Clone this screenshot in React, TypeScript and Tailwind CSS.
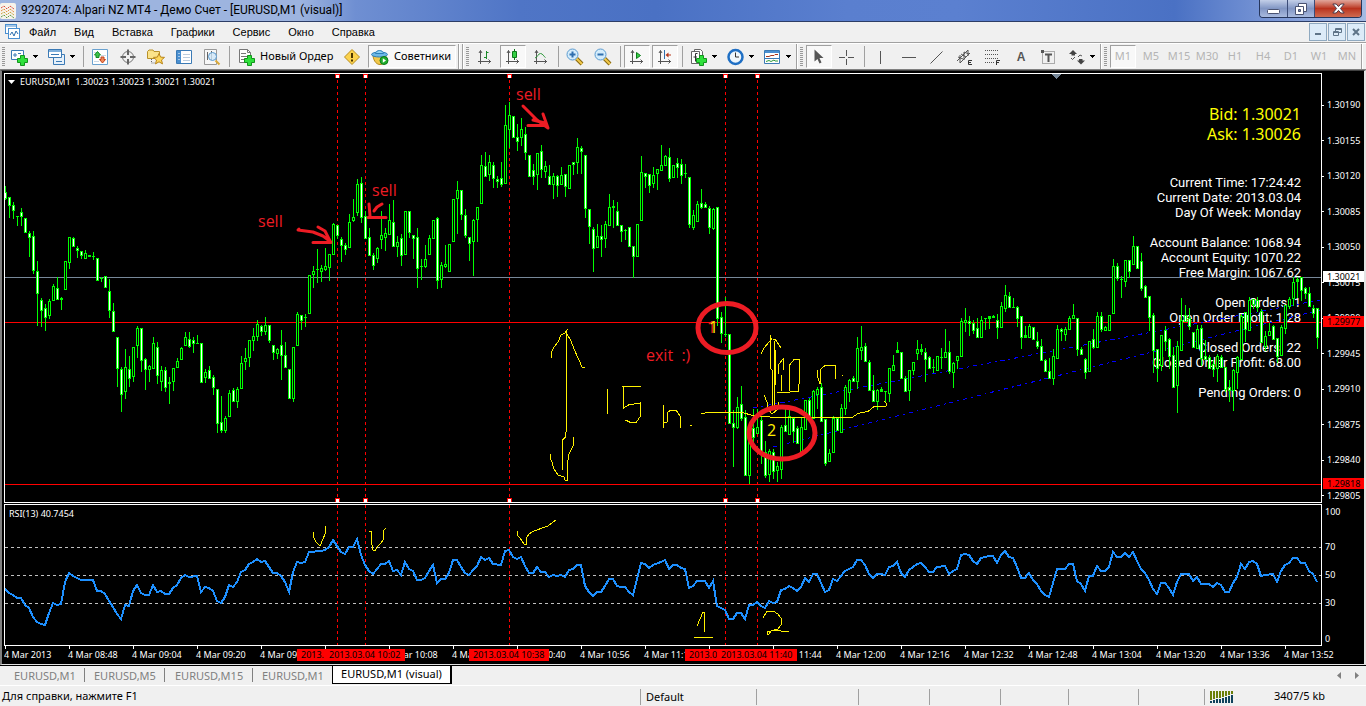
import type { ReactNode } from 'react'

// high, body top, body bottom, low, kind (d = falling, u = rising, x = doji)
const CANDLES = `186 192 198 199 d|197 197 205 217 d|202 205 210 218 d|216 216 216 225 x|208 212 216 225 d|218 218 232 232 d|231 233 237 256 d|231 236 270 273 d|261 271 293 325 d|298 300 310 326 d
304 308 317 330 d|299 301 315 318 u|284 286 300 300 u|277 288 299 299 d|297 298 299 309 x|261 261 289 289 u|237 237 262 268 u|237 238 246 246 d|246 248 250 257 d|251 251 255 258 d
250 253 258 258 u|255 255 256 256 x|252 256 256 259 x|258 258 280 280 d|277 278 278 281 x|276 276 287 287 d|279 291 310 317 d|303 311 331 331 d|337 337 368 386 d|367 369 394 411 d
349 367 391 398 u|356 369 378 386 d|347 347 376 381 u|326 328 345 357 u|328 328 360 371 d|358 359 369 389 d|365 366 369 381 u|337 343 368 368 u|342 347 375 383 d|366 370 381 390 u
367 370 387 391 d|377 382 383 403 x|368 368 381 390 u|358 361 367 367 u|347 348 359 359 u|332 337 345 345 u|332 339 346 347 d|337 340 343 352 d|335 343 343 343 x|343 343 382 382 d
369 372 377 382 u|366 370 378 378 d|375 377 387 394 d|389 389 423 432 d|396 422 430 432 d|416 418 430 432 u|390 393 416 416 u|388 390 401 401 d|387 389 401 407 u|356 363 388 388 u
348 358 361 369 u|340 340 357 366 u|328 336 340 350 u|320 324 336 340 u|325 326 331 335 d|317 325 331 334 u|325 325 340 342 d|345 345 352 359 d|348 349 353 358 u|330 345 355 379 d
342 355 367 367 d|369 369 398 398 d|347 347 398 401 u|312 314 345 345 u|315 315 320 329 d|314 317 317 326 x|275 275 313 313 u|266 271 274 287 u|249 269 269 282 x|265 268 271 281 u
248 266 269 270 u|254 254 267 280 u|223 224 254 254 u|225 225 235 238 d|237 239 245 261 d|243 245 249 254 d|214 222 247 247 u|199 217 220 221 u|179 184 212 215 u|177 183 217 222 d
211 216 238 238 d|228 237 255 255 d|253 255 265 269 d|247 248 258 262 u|211 235 239 248 u|228 233 237 250 u|204 220 234 234 u|200 222 246 246 d|236 242 246 256 u|234 238 255 265 d
211 211 254 254 u|211 211 232 237 d|235 235 238 258 d|228 237 268 287 d|259 266 266 279 x|245 259 266 267 u|235 238 254 254 u|220 220 238 238 u|217 218 280 288 d|262 265 279 287 u
245 264 266 267 u|244 244 271 271 u|199 199 241 241 u|181 190 198 233 u|190 190 214 219 d|209 215 235 237 d|237 237 243 260 d|219 220 241 275 u|207 207 219 241 u|155 165 203 203 u
152 166 176 176 d|155 162 174 180 u|162 165 178 187 d|176 179 181 187 d|162 178 184 186 d|105 125 183 183 u|102 115 129 147 u|116 116 137 137 d|124 137 141 150 d|118 129 137 145 u
127 134 152 159 d|155 155 176 176 d|164 170 176 184 d|153 153 174 189 u|145 151 169 177 d|161 166 171 177 u|165 176 184 184 d|173 176 184 198 u|175 176 185 196 d|167 175 184 184 u
174 174 186 196 d|165 165 188 188 u|162 162 164 174 d|138 147 162 173 u|146 148 151 173 d|155 155 208 217 d|209 209 226 243 d|227 229 248 271 d|224 236 247 247 u|225 236 239 256 d
221 224 238 247 u|194 207 225 225 u|200 206 207 227 x|202 211 225 225 d|225 225 231 241 d|229 230 230 239 x|227 227 246 246 d|246 246 256 277 d|224 224 256 256 u|156 172 220 220 u
173 173 176 187 d|174 174 185 192 d|167 175 183 187 u|169 169 173 189 u|145 165 170 170 u|155 156 165 165 u|148 157 178 181 d|165 165 177 177 u|158 163 167 177 d|159 164 175 183 d
164 173 173 177 x|177 177 224 227 d|210 215 227 229 u|201 204 221 221 u|189 203 207 208 d|202 204 207 207 d|206 208 227 233 d|208 209 228 229 u|207 207 318 325 d|312 317 333 342 d
297 334 334 336 x|334 334 423 423 d|410 423 427 466 d|397 407 427 428 u|386 404 418 420 d|410 417 475 475 d|426 426 475 483 u|409 428 437 443 d|409 427 433 433 u|417 420 451 463 d
441 452 475 477 d|449 451 474 481 u|449 452 471 478 d|462 466 470 481 u|425 427 469 478 u|409 425 431 431 d|406 416 434 434 u|417 418 431 442 d|426 428 443 443 d|417 427 452 452 u
400 400 429 429 u|398 400 418 418 d|390 391 418 418 u|387 389 394 408 u|383 387 421 421 d|419 419 463 465 d|449 453 461 461 u|416 418 452 452 u|418 418 430 430 d|404 408 432 432 u
385 387 408 414 u|379 380 392 401 u|376 378 381 381 d|337 348 381 388 u|326 347 350 359 u|343 346 361 361 d|360 362 390 390 d|375 390 401 401 d|389 390 401 409 u|387 389 391 391 x
391 391 391 402 x|368 368 393 401 u|355 365 370 370 u|342 350 352 352 x|352 352 378 378 d|376 378 391 391 d|370 370 390 400 u|362 362 370 374 u|340 349 353 359 u|344 349 351 354 x
348 352 359 381 d|356 357 368 368 d|359 367 367 372 x|356 356 370 370 u|348 357 357 368 x|329 352 357 357 u|341 352 371 373 d|362 363 372 387 u|356 356 360 368 u|318 321 356 356 u
308 320 322 331 u|316 321 323 335 d|320 323 330 333 d|318 328 337 337 d|316 320 337 337 u|318 318 318 329 x|316 316 318 328 x|315 316 317 317 x|314 320 327 338 d|302 306 327 327 u
285 295 308 311 u|292 296 307 307 d|298 307 307 307 x|306 307 318 326 d|316 316 337 348 d|326 335 337 337 x|324 326 337 337 u|327 327 339 339 d|332 341 346 348 d|339 346 360 360 d
359 360 371 371 d|358 371 378 378 d|349 356 378 384 u|325 329 358 358 u|328 329 331 340 d|327 329 334 340 u|316 318 329 329 u|304 315 318 318 u|318 318 349 355 d|347 349 354 354 d
358 359 372 378 d|341 341 371 371 u|329 339 347 348 d|312 316 347 347 u|312 316 329 331 d|326 327 330 330 u|315 315 330 330 u|259 266 313 313 u|263 266 278 280 d|276 279 279 297 x
260 260 281 286 u|260 260 271 277 d|236 246 264 264 u|246 246 268 268 d|253 261 288 290 d|285 286 297 297 d|296 296 317 330 d|313 315 350 372 d|349 349 368 381 d|335 335 365 370 u
326 330 341 350 d|338 339 356 368 d|347 355 387 387 d|341 346 385 412 u|298 320 350 350 u|305 315 321 321 d|308 318 326 329 d|332 332 347 347 d|325 329 348 348 u|325 328 358 365 d
340 356 359 359 d|355 357 368 368 d|360 364 369 376 d|354 356 368 381 u|355 357 367 367 d|367 367 389 391 d|380 387 390 401 d|369 370 390 410 u|356 357 372 388 u|314 316 359 359 u
312 312 329 341 d|297 300 330 330 u|299 299 304 308 d|297 300 307 311 d|309 311 342 342 d|331 336 346 350 u|323 331 335 335 u|325 326 339 339 d|338 338 356 362 d|325 327 355 355 u
305 305 328 333 u|297 299 306 308 u|277 282 298 305 u|277 279 281 297 x|277 277 290 300 d|287 288 293 298 d|287 293 306 306 d|305 308 313 317 d|308 308 337 348 d`
  .split(/[|\n]/)
  .map((row) => {
    const [high, top, bottom, low, kind] = row.split(' ')
    return { high: +high, top: +top, bottom: +bottom, low: +low, kind }
  })

const RSI =
  '5,589 9,593 13,595 17,598 21,598 25,605 29,608 33,617 37,622 41,624 45,625 49,613 53,603 57,605 61,604 65,582 69,573 73,576 77,578 81,580 93,580 97,591 101,591 105,594 109,601 113,607 117,614 121,619 125,605 129,606 133,591 137,585 141,593 145,595 149,595 153,585 157,592 161,591 165,594 169,594 173,588 177,585 181,578 185,575 189,577 197,576 201,592 205,587 209,588 213,591 217,601 221,603 225,597 229,585 233,587 237,582 241,572 245,570 249,564 253,562 257,559 261,562 265,561 269,567 273,573 277,573 281,576 285,582 289,592 293,572 297,562 301,563 305,562 309,552 321,551 325,550 329,547 333,540 337,546 341,552 345,554 349,547 353,547 357,539 361,555 365,565 369,571 373,574 377,569 381,564 385,564 389,561 393,571 397,570 401,575 405,562 409,569 413,571 417,580 421,580 425,578 429,571 433,565 437,583 441,579 445,579 449,573 453,560 457,560 461,567 465,573 469,575 473,570 477,566 481,557 485,560 489,558 493,564 501,565 505,551 509,550 513,557 517,559 521,557 525,566 529,573 533,573 537,567 541,572 545,572 549,577 553,575 557,576 561,575 565,577 569,570 573,569 577,565 581,565 585,586 589,592 593,596 597,592 601,592 605,586 609,579 613,579 617,586 621,587 625,587 629,592 633,595 637,579 641,563 645,564 649,568 653,565 661,562 665,560 669,569 673,565 677,565 681,568 685,569 689,588 693,586 697,581 705,581 709,588 713,581 717,606 721,608 725,610 729,619 733,619 737,613 741,613 745,619 749,605 753,605 757,602 761,606 765,608 769,601 773,603 777,602 781,590 785,589 789,586 793,588 797,591 801,587 805,578 809,582 813,574 817,574 821,583 825,592 829,590 833,579 837,581 841,576 845,571 849,569 853,567 857,560 861,560 865,565 869,574 873,578 877,574 881,574 885,575 889,567 893,566 897,562 901,573 905,577 909,570 913,567 917,564 921,563 925,567 929,572 933,572 937,567 945,566 949,574 953,571 957,569 961,555 965,554 969,555 973,561 977,564 981,558 989,556 993,556 997,563 1001,555 1005,551 1009,557 1013,558 1017,567 1021,578 1025,578 1029,573 1033,580 1037,584 1041,591 1045,595 1049,597 1053,583 1057,569 1065,569 1069,564 1073,564 1077,581 1081,584 1085,591 1089,576 1093,576 1097,566 1101,571 1105,571 1109,567 1113,552 1117,557 1121,557 1125,553 1129,557 1133,552 1137,561 1141,569 1145,573 1149,580 1153,589 1157,594 1161,583 1165,583 1169,588 1173,595 1177,582 1181,574 1189,574 1193,581 1197,577 1201,584 1209,584 1213,587 1217,583 1221,585 1225,592 1229,592 1233,583 1237,577 1241,564 1245,569 1249,562 1253,561 1257,564 1261,576 1265,575 1273,574 1277,582 1281,571 1285,565 1289,563 1293,558 1297,558 1301,563 1305,563 1309,571 1313,574 1317,582'

const MARKS = [337, 365, 509, 725, 757]

const PRICES = ['1.30190', '1.30155', '1.30120', '1.30085', '1.30050', '1.30015', '1.29980', '1.29945', '1.29910', '1.29875', '1.29840', '1.29805']

const TIMES = Array.from({ length: 21 }, (_, i) => {
  if (i === 0) return '4 Mar 2013'
  const m = 8 * 60 + 32 + i * 16
  return `4 Mar ${String(Math.floor(m / 60)).padStart(2, '0')}:${String(m % 60).padStart(2, '0')}`
})

const STATS = [
  'Current Time: 17:24:42',
  'Current Date: 2013.03.04',
  'Day Of Week: Monday',
  '',
  'Account Balance: 1068.94',
  'Account Equity: 1070.22',
  'Free Margin: 1067.62',
  '',
  'Open Orders: 1',
  'Open Order Profit: 1.28',
  '',
  'Closed Orders: 22',
  'Closed Order Profit: 68.00',
  '',
  'Pending Orders: 0',
]

/* ---------- toolbar pieces ---------- */

function Icon({ children }: { children: ReactNode }) {
  return (
    <svg width="18" height="18" viewBox="0 0 18 18" fill="none" className="shrink-0">
      {children}
    </svg>
  )
}

function Tool({ label, pressed, children }: { label: string; pressed?: boolean; children: ReactNode }) {
  return (
    <button
      aria-label={label}
      className={
        pressed
          ? 'mx-px flex h-[23px] w-[26px] shrink-0 items-center justify-center border border-t-[#a0a0a0] border-r-white border-b-white border-l-[#a0a0a0] bg-[#f8f8f8]'
          : 'flex h-[23px] w-7 shrink-0 items-center justify-center'
      }
    >
      {children}
    </button>
  )
}

function DropTool({ label, children }: { label: string; children: ReactNode }) {
  return (
    <button aria-label={label} className="flex h-[23px] w-[37px] shrink-0 items-center gap-1 pl-[5px]">
      {children}
      <svg width="5" height="3" viewBox="0 0 5 3" shapeRendering="crispEdges">
        <path d="M0 0h5v1H0zM1 1h3v1H1zM2 2h1v1H2z" fill="#000" />
      </svg>
    </button>
  )
}

function Period({ name, pressed }: { name: string; pressed?: boolean }) {
  return (
    <Tool label={name} pressed={pressed}>
      <span className="text-[11px] text-[#b4b4b4]">{name}</span>
    </Tool>
  )
}

function Separator() {
  return (
    <div className="flex w-[6px] shrink-0 justify-center">
      <div className="h-[21px] w-px bg-[#a0a0a0]" />
    </div>
  )
}

function Grip() {
  return (
    <svg width="3" height="20" viewBox="0 0 3 20" shapeRendering="crispEdges" className="mr-[2px] shrink-0">
      <path d="M1.5 0v20" stroke="#999" strokeWidth="3" strokeDasharray="1 1" />
    </svg>
  )
}

function GroupEdge() {
  return <div className="h-[25px] w-[2px] shrink-0 border-r border-white bg-[#a0a0a0]" />
}

function Plus() {
  return <path d="M9.500 7.500h4v3h3v4h-3v3h-4v-3h-3v-4h3z" fill="#2fe03c" stroke="#12941c" />
}

function Axes() {
  return (
    <path d="M4.500 2.500v13.500M2 13.500h13M3 5l1.500-2.500L6 5M12.500 11.500l2 2-2 2" stroke="#555" />
  )
}

function Magnifier({ plus }: { plus?: boolean }) {
  return (
    <Icon>
      <path d="M10.500 10.500l5.500 5.500" stroke="#8a6a10" strokeWidth="4" />
      <path d="M10.500 10.500l5.500 5.500" stroke="#f2c94c" strokeWidth="2" />
      <circle cx="6.500" cy="6.500" r="5.500" fill="#d4ecfb" stroke="#5b9bd0" />
      <path d="M3.500 6.500h6" stroke="#2f6fae" strokeWidth="2" />
      {plus && <path d="M6.500 3.500v6" stroke="#2f6fae" strokeWidth="2" />}
    </Icon>
  )
}

function TitleBar() {
  return (
    <header className="flex h-[22px] shrink-0 items-start border-b border-[#2d3d66] bg-[linear-gradient(90deg,#9db4df_0%,#9db4df_22%,#6f8fd2_26%,#4f75c6_38%,#4a71c4_48%,#5a7fcf_62%,#5b80d0_70%,#4a71c4_86%,#7f9bd8_94%,#a5bbe3_100%)]">
      <svg width="16" height="16" viewBox="0 0 16 16" className="mt-[3px] shrink-0" fill="none">
        <rect width="16" height="16" rx="2" fill="#f7f3ea" />
        <path d="M1 5l3-2 3 3 3-3 4 3" stroke="#d9483b" strokeDasharray="2 1" />
        <path d="M1 8l3-2 3 3 3-3 4 3" stroke="#e08a3c" strokeDasharray="2 1" />
        <path d="M1 11l3-2 3 3 3-3 4 3" stroke="#c5a03a" strokeDasharray="2 1" />
        <path d="M1 14l3-2 3 3 3-3 4 3" stroke="#5c9a46" strokeDasharray="2 1" />
      </svg>
      <h1 className="ml-[5px] grow font-['Roboto',sans-serif] text-[12px] leading-[21px] whitespace-nowrap text-black">
        9292074: Alpari NZ MT4 - Демо Счет - [EURUSD,M1 (visual)]
      </h1>
      <div className="mr-[4px] flex h-[18px] overflow-hidden rounded-b-[4px] border border-t-0 border-[#26365c]">
        <button aria-label="Minimize" className="flex w-[28px] items-center justify-center border-r border-[#3b4c78] bg-linear-to-b from-[#c3cfe8] via-[#8296c4] to-[#a9bade]">
          <svg width="13" height="10" viewBox="0 0 13 10">
            <rect x=".5" y="5.500" width="12" height="4" rx="1" fill="#fff" stroke="#4a5372" />
          </svg>
        </button>
        <button aria-label="Restore" className="flex w-[27px] items-center justify-center border-r border-[#3b4c78] bg-linear-to-b from-[#c3cfe8] via-[#8296c4] to-[#a9bade]">
          <svg width="12" height="12" viewBox="0 0 12 12">
            <path d="M3.500.5h8v8h-8z" fill="#fff" stroke="#4a5372" />
            <path d="M.5 3.500h8v8h-8z" fill="#fff" stroke="#4a5372" />
            <path d="M3.500 6.500h2v2h-2z" fill="#7d8db5" stroke="#4a5372" />
          </svg>
        </button>
        <button aria-label="Close" className="flex w-[46px] items-center justify-center bg-linear-to-b from-[#e0a69b] via-[#b9321d] to-[#cf6a50]">
          <svg width="13" height="11" viewBox="0 0 13 11">
            <path d="M.8 1h3.400l2.300 2.600L8.800 1h3.400L8.400 5.500 12.200 10H8.800L6.500 7.400 4.200 10H.8l3.800-4.500z" fill="#fff" stroke="#4a3a4a" />
          </svg>
        </button>
      </div>
    </header>
  )
}

function MenuBar() {
  const mdi = 'flex h-[18px] w-[18px] items-center justify-center border border-[#8fa9c0] bg-[#dcebf8]'
  return (
    <nav className="flex h-[21px] shrink-0 items-center border-b border-[#a0a0a0] bg-[#f0f0f0] font-['Liberation_Sans',sans-serif] text-[11px] text-black">
      <svg width="16" height="16" viewBox="0 0 16 16" fill="none" className="ml-[5px] shrink-0">
        <rect x=".5" y=".5" width="11" height="9" fill="#fff" stroke="#4a8fd0" />
        <path d="M1 2h10" stroke="#4a8fd0" />
        <rect x="3.500" y="4.500" width="11" height="10" fill="#fff" stroke="#4a8fd0" />
        <path d="M5 11l2-3 2 4 2-5 2 3" stroke="#2f6fae" />
      </svg>
      <div className="flex grow items-center gap-[18px] pl-[8px]">
        <button>Файл</button>
        <button>Вид</button>
        <button>Вставка</button>
        <button>Графики</button>
        <button>Сервис</button>
        <button>Окно</button>
        <button>Справка</button>
      </div>
      <div className="flex gap-px pr-px">
        <button aria-label="Minimize chart" className={mdi}>
          <svg width="8" height="8" viewBox="0 0 8 8"><path d="M1 6h6" stroke="#5f7488" strokeWidth="2" /></svg>
        </button>
        <button aria-label="Restore chart" className={mdi}>
          <svg width="9" height="9" viewBox="0 0 9 9" fill="none" stroke="#5f7488">
            <path d="M2.500 3V.5h6v4H6M3 1.500h5" />
            <path d="M.5 3.500h5v4h-5zM1 4.500h4" />
          </svg>
        </button>
        <button aria-label="Close chart" className={mdi}>
          <svg width="8" height="8" viewBox="0 0 8 8"><path d="M1 1l6 6M7 1L1 7" stroke="#5f7488" strokeWidth="2" /></svg>
        </button>
      </div>
    </nav>
  )
}

function Toolbar() {
  return (
    <div className="flex h-[27px] shrink-0 items-center overflow-hidden border-t border-t-white border-b border-b-[#808080] bg-[#f0f0f0] pl-[2px]">
      <Grip />
      <div className="-ml-px flex items-center">
        <DropTool label="New chart">
          <Icon>
            <path d="M.5 2.500h12v9H.5z" fill="#fff" stroke="#3b7ab5" />
            <path d="M2 7h4M4 5v4M7 5.500h3" stroke="#3b7ab5" />
            <Plus />
          </Icon>
        </DropTool>
        <DropTool label="Profiles">
          <Icon>
            <path d="M5.500 6.500h11v10h-11z" fill="#e7f1fa" stroke="#3b7ab5" />
            <path d="M.5 1.500h13v8H.5z" fill="#fff" stroke="#3b7ab5" />
            <path d="M1 3h12" stroke="#7fb0dc" strokeWidth="2" />
            <path d="M3 6.500h8M8 13.500h6" stroke="#3b7ab5" />
          </Icon>
        </DropTool>
      </div>
      <Separator />
      <Tool label="Market watch">
        <Icon>
          <path d="M1.500 1.500h15v15h-15z" fill="#fff" stroke="#6aa2d0" />
          <path d="M3 4.500h5M10 7.500h5M3 13.500h5" stroke="#c9d8e6" />
          <path d="M6.500 3.500l3 3.500h-1.500v2.500h-3V7H3.500z" fill="#3cc24a" stroke="#128a20" />
          <path d="M11.500 15l3-3.500h-1.500V9h-3v2.500H8.500z" fill="#f08a5c" stroke="#c2431a" />
        </Icon>
      </Tool>
      <Tool label="Navigator">
        <Icon>
          <circle cx="9" cy="9" r="5.500" stroke="#777" />
          <path d="M9 1.500v5.500M9 11v5.500M1.500 9h5.500M11 9h5.500" stroke="#666" strokeWidth="2" />
        </Icon>
      </Tool>
      <Tool label="Favorites">
        <Icon>
          <path d="M.5 3.500L2 2h4l1 1.500h5.500v7H.5z" fill="#fbe38a" stroke="#b8912a" />
          <path d="M4.500 11v4M4.500 15h3" stroke="#666" strokeDasharray="1 1" />
          <path d="M12 5.500l1.600 3.600 3.900.3-3 2.600 1 3.900-3.500-2.100L8.500 15.900l1-3.900-3-2.600 3.900-.3z" fill="#fdd75c" stroke="#b8851a" />
        </Icon>
      </Tool>
      <Tool label="Data window">
        <Icon>
          <path d="M1.500 2.500h15v13h-15z" fill="#fff" stroke="#3b7ab5" />
          <path d="M2 3h4v12H2z" fill="#4a8fd0" />
          <path d="M8 6.500h7M8 9.500h7M8 12.500h7" stroke="#bcd" />
          <path d="M4 5v9" stroke="#fff" strokeDasharray="1 2" />
        </Icon>
      </Tool>
      <Tool label="Strategy tester">
        <Icon>
          <path d="M1.500 1.500h12v15h-12z" fill="#f7f7f7" stroke="#999" />
          <path d="M4.500 4v8M8.500 3v9" stroke="#666" />
          <path d="M12.500 12.500l4 4" stroke="#d9a93a" strokeWidth="2" />
          <circle cx="9.500" cy="8.500" r="4" fill="#cfe6f8" fillOpacity=".8" stroke="#5b9bd0" />
        </Icon>
      </Tool>
      <Separator />
      <button className="flex h-[23px] w-[106px] shrink-0 items-center gap-[4px] pl-[6px] text-[11px] whitespace-nowrap text-black">
        <Icon>
          <path d="M1.500 1.500h8l3 3v10h-11z" fill="#fff" stroke="#777" />
          <path d="M9.500 1.500v3h3M3 5.500h5M3 8.500h7M3 11.500h4" stroke="#777" />
          <Plus />
        </Icon>
        Новый Ордер
      </button>
      <Tool label="Alerts">
        <Icon>
          <path d="M9 1.500L16.500 9 9 16.500 1.500 9z" fill="#fbd24e" stroke="#b98d1c" strokeLinejoin="round" />
          <path d="M9 5v5M9 11.500v2" stroke="#4a3500" strokeWidth="2" />
        </Icon>
      </Tool>
      <button className="mx-[2px] flex h-[23px] w-[88px] shrink-0 items-center gap-[5px] border border-t-[#a0a0a0] border-r-white border-b-white border-l-[#a0a0a0] bg-[#f8f8f8] pl-[2px] text-[11px] whitespace-nowrap text-black">
        <Icon>
          <path d="M2 8c1 6 4 8.500 7 8.500S14 15 15 8z" fill="#f2c84b" stroke="#b38a1e" />
          <ellipse cx="8.500" cy="6.500" rx="8" ry="2.500" fill="#6db8e6" stroke="#2d7fb8" />
          <path d="M4.500 5.500C5 1.500 12 1.500 12.500 5.500z" fill="#8fd0f2" stroke="#2d7fb8" />
          <circle cx="13" cy="12.500" r="4" fill="#1fae2d" stroke="#0c7a17" />
          <path d="M11.800 10.300v4.400l3.200-2.200z" fill="#fff" />
        </Icon>
        Советники
      </button>
      <div className="mr-[2px]"><GroupEdge /></div>
      <div className="mr-[2px]"><GroupEdge /></div>
      <Grip />
      <Tool label="Bar chart">
        <Icon>
          <Axes />
          <path d="M10.500 3v8M10.500 4.500h2M8 9.500h2.500" stroke="#1c8a2a" />
        </Icon>
      </Tool>
      <Tool label="Candlesticks" pressed>
        <Icon>
          <Axes />
          <path d="M10.500 1v11" stroke="#0d7a1a" />
          <path d="M8.500 3.500h4v6h-4z" fill="#35d045" stroke="#0d7a1a" />
        </Icon>
      </Tool>
      <Tool label="Line chart">
        <Icon>
          <Axes />
          <path d="M3 10c3-1 3-4.500 5.500-4.500s3 3 5 4" stroke="#2f9a3c" />
        </Icon>
      </Tool>
      <Separator />
      <Tool label="Zoom in"><Magnifier plus /></Tool>
      <Tool label="Zoom out"><Magnifier /></Tool>
      <Separator />
      <Tool label="Auto scroll" pressed>
        <Icon>
          <Axes />
          <path d="M8.500 4.500v6l4-3z" fill="#35d045" stroke="#0d7a1a" />
        </Icon>
      </Tool>
      <Tool label="Chart shift" pressed>
        <Icon>
          <Axes />
          <path d="M8.500 2v9" stroke="#2f6fae" />
          <path d="M9.500 7l3-2.500v5zM12 6.500h3v1h-3z" fill="#b5361a" />
        </Icon>
      </Tool>
      <Separator />
      <DropTool label="Indicators">
        <Icon>
          <path d="M4.500 1.500h6l2 2v9h-8z" fill="#fff" stroke="#666" />
          <path d="M1.500 3.500h8v12h-8z" fill="#fff" stroke="#666" />
          <path d="M7.500 5.500H5.500v8M3.500 9h3.500" stroke="#333" />
          <Plus />
        </Icon>
      </DropTool>
      <DropTool label="Periods">
        <Icon>
          <circle cx="8.500" cy="9" r="7" fill="#eef6fc" stroke="#1f6fc4" strokeWidth="2.500" />
          <path d="M8.500 4.500V9H12" stroke="#333" />
        </Icon>
      </DropTool>
      <DropTool label="Templates">
        <Icon>
          <path d="M.5 2.500h15v13H.5z" fill="#fff" stroke="#3b7ab5" />
          <path d="M1 4h14" stroke="#4a8fd0" strokeWidth="2" />
          <path d="M2 8.500h3l2-1h3l1-1h3" stroke="#a8361c" />
          <path d="M1 10.500h14" stroke="#3b7ab5" />
          <path d="M2 13.500l3-1 2 1 3-1.500 1 1h3" stroke="#2f9a3c" />
        </Icon>
      </DropTool>
      <div className="mr-[2px]"><GroupEdge /></div>
      <Grip />
      <Tool label="Cursor" pressed>
        <Icon>
          <path d="M4.500 1.500v12l3-2.500 2 4.500 2-1-2-4.500h4z" fill="#555" />
        </Icon>
      </Tool>
      <Tool label="Crosshair">
        <Icon><path d="M8.500 2v6M8.500 11v6M1 9.500h6M10 9.500h6" stroke="#555" /></Icon>
      </Tool>
      <Separator />
      <Tool label="Vertical line">
        <Icon><path d="M8.500 3v13" stroke="#555" /></Icon>
      </Tool>
      <Tool label="Horizontal line">
        <Icon><path d="M2 9.500h14" stroke="#555" /></Icon>
      </Tool>
      <Tool label="Trend line">
        <Icon><path d="M2.500 15.500L14.500 3.500" stroke="#555" /></Icon>
      </Tool>
      <Tool label="Channel">
        <Icon>
          <path d="M1 13L12 2M4 15L14 5M2 9l5 2M5 6l5 3M8 4l5 2M4 7v8M8 4v8M12 2v6" stroke="#555" />
          <path d="M16 12.500h-3.500v4H16M12.500 14.500H15" stroke="#333" />
        </Icon>
      </Tool>
      <Tool label="Fibonacci">
        <Icon>
          <path d="M1 2.500h14M1 6.500h14M1 10.500h14M1 14.500h9" stroke="#555" strokeDasharray="1 1" />
          <path d="M12.500 17v-4.500H16M12.500 14.500H15" stroke="#333" />
        </Icon>
      </Tool>
      <Tool label="Text">
        <span className="font-['Liberation_Sans',sans-serif] text-[12px] font-bold text-[#555]">A</span>
      </Tool>
      <Tool label="Text label">
        <Icon>
          <path d="M2.500 3.500h12v12h-12z" stroke="#666" strokeDasharray="1 1" />
          <path d="M1 2h3v3H1z" fill="#555" />
          <path d="M5 6.500h7M8.500 6v8" stroke="#555" strokeWidth="2" />
        </Icon>
      </Tool>
      <DropTool label="Arrows">
        <Icon>
          <path d="M5 2l4 4H7v1.500H3.500V6H1zM13 16.500l-4-4h2V11h3.500v1.500H17z" fill="#444" />
          <path d="M3 10l1.500 1.500L7 9M10 9l2-2 2 1" stroke="#555" />
        </Icon>
      </DropTool>
      <div className="mr-[2px]"><GroupEdge /></div>
      <Grip />
      <Period name="M1" pressed />
      <Period name="M5" />
      <Period name="M15" />
      <Period name="M30" />
      <Period name="H1" />
      <Period name="H4" />
      <Period name="D1" />
      <Period name="W1" />
      <Period name="MN" />
      <GroupEdge />
    </div>
  )
}

/* ---------- chart ---------- */

function Candles() {
  return (
    <g shapeRendering="crispEdges">
      {CANDLES.map((c, i) => {
        const x = 5 + i * 4
        const outline = `M${x} ${c.high}h1v${c.low - c.high + 1}h-1zM${x - 1} ${c.top}h3v${c.bottom - c.top + 1}h-3z`
        return (
          <g key={i}>
            <path d={outline} fill="#0f0" />
            {c.kind !== 'x' && c.bottom - c.top > 1 && (
              <rect x={x} y={c.top + 1} width="1" height={c.bottom - c.top - 1} fill={c.kind === 'd' ? '#fff' : '#000'} />
            )}
          </g>
        )
      })}
    </g>
  )
}

function Handle({ x, y }: { x: number; y: number }) {
  return (
    <g shapeRendering="crispEdges">
      <rect x={x - 2} y={y - 1} width="5" height="4" fill="#f00" />
      <rect x={x - 1} y={y} width="3" height="3" fill="#fff" />
    </g>
  )
}

function PricePanel() {
  return (
    <section className="relative min-w-0 grow overflow-hidden border border-white">
      <p className="absolute top-[1px] left-[3px] flex items-center gap-[5px] text-[9px] leading-[14px] whitespace-pre text-white">
        <svg width="7" height="4" viewBox="0 0 7 4"><path d="M0 0h7L3.500 4z" fill="#fff" /></svg>
        EURUSD,M1  1.30023 1.30023 1.30021 1.30021
      </p>
      <div className="absolute top-[30px] right-[20px] text-right text-[16px] leading-[20px] text-[#ff0]">
        <p>Bid: 1.30021</p>
        <p>Ask: 1.30026</p>
      </div>
      <div className="absolute top-[101px] right-[20px] text-right font-['Roboto',sans-serif] text-[13px] leading-[15px] text-white">
        {STATS.map((line, i) => (
          <p key={i} className="h-[15px]">{line}</p>
        ))}
      </div>
      <svg viewBox="5 74 1316 428" preserveAspectRatio="none" className="absolute inset-0 h-full w-full" fill="none">
        <g shapeRendering="crispEdges">
          <path d="M5 277.500H1321" stroke="#778899" />
          {MARKS.map((x) => (
            <path key={x} d={`M${x + 0.5} 80V502`} stroke="#f00" strokeDasharray="3 3" />
          ))}
          <path d="M5 322.500H1321M5 484.500H1321" stroke="#f00" />
          <path d="M1051 74h11l-5.500 5z" fill="#778899" />
          <path d="M753 408L1320 300M773 447L1320 310" stroke="#00f" strokeDasharray="4 4 2 4" />
        </g>
        <Candles />
        {MARKS.map((x) => (
          <g key={x}>
            <Handle x={x} y={75} />
            <Handle x={x} y={499} />
          </g>
        ))}
        <g stroke="#fff200" shapeRendering="crispEdges">
          <path d="M551 358v-5l3-6 4-5 3-7 4-2 3-4M566 332l5 9 3 8 5 11 3 7 3 1M566.500 333v94l-1 10-3 3v30" />
          <path d="M550 454v4l2 4 2 7 4 6 6 2 1 3h2v-13l2-13 4-8 1-9" />
          <path d="M607.500 389v25M641 386.500h-19M623.500 386v22l5-3 6-1 6-1v13l-4 6h-7l-4-2" />
          <path d="M663.500 405v23M663 423l4-1v-9l4-3h5l4 6 1 12M690 425.500h2" />
          <path d="M701 414l6-1.500h35l11 3 14 1 6 1h79l6-4 10-2 6-5 12-.5v-3l-2-2" />
          <path d="M761 354l3-6 6-7 2-3M770.500 335v33l2 3v39M774 341v69M775 350v35M773 339l2 0 6 9M764 395l3 7 1 7 4 5 6-5 1-7" />
          <path d="M778 374l1-10 4-5v11M781.500 375v16M777 392.500h13M789.500 391v-26l5-6h5v18l-1 14h-9" />
          <path d="M817 370l1 8 2 6v-14l5-4.500h10v13M842 375.500h1" />
        </g>
        <g stroke="#ed1c24" strokeWidth="3" strokeLinecap="round" strokeLinejoin="round">
          <path d="M299 229l-1 1 15 2 10 4 8 6M318 227l7 4 5 10M313 242.500h18" />
          <path d="M369 204l1 12M382 204l-5 3-3 4M368 217.500h18" />
          <path d="M523 106l7 7 7 7 11 8M543 114l5 14M528 125.500h18M533 120l12 3" />
          <ellipse cx="727" cy="328" rx="29" ry="24.500" strokeWidth="5" />
          <ellipse cx="782" cy="433" rx="33" ry="26" strokeWidth="5" />
        </g>
      </svg>
      <div className="font-['Open_Sans',sans-serif] text-[16px] leading-[20px] text-[#ed1c24]">
        <span className="absolute top-[10px] left-[511px]">sell</span>
        <span className="absolute top-[106px] left-[367px]">sell</span>
        <span className="absolute top-[137px] left-[253px]">sell</span>
        <span className="absolute top-[271px] left-[641px] whitespace-pre">exit  :)</span>
        <span className="absolute top-[243px] left-[704px] text-[#fff200] [text-shadow:-2px_0_#ed1c24]">1</span>
        <span className="absolute top-[346px] left-[762px] text-[#fff200]">2</span>
      </div>
    </section>
  )
}

function PriceAxis() {
  const tag = 'absolute left-px w-[41px] pl-[4px] text-[9px] leading-[11px]'
  return (
    <div className="relative flex w-[42px] shrink-0 flex-col justify-between pt-[26px] pb-px text-[9px] leading-[12px] text-white">
      {PRICES.map((p) => (
        <div key={p} className="flex items-center gap-[3px]">
          <i className="h-px w-[2px] bg-white" />
          {p}
        </div>
      ))}
      <span className={`${tag} top-[198px] bg-white text-black`}>1.30021</span>
      <span className={`${tag} top-[243px] bg-[#f00] text-black`}>1.29977</span>
      <span className={`${tag} top-[405px] bg-[#f00] text-black`}>1.29818</span>
    </div>
  )
}

function RsiPanel() {
  return (
    <section className="relative min-w-0 grow overflow-hidden border border-white">
      <p className="absolute top-[2px] left-[4px] text-[9px] leading-[14px] text-white">RSI(13) 40.7454</p>
      <svg viewBox="5 505 1316 140" preserveAspectRatio="none" className="absolute inset-0 h-full w-full" fill="none">
        <g shapeRendering="crispEdges">
          <path d="M5 547.500H1321M5 575.500H1321M5 603.500H1321" stroke="#c0c0c0" strokeDasharray="3 3" />
          {MARKS.map((x) => (
            <path key={x} d={`M${x + 0.5} 505V645`} stroke="#f00" strokeDasharray="3 3" />
          ))}
          <polyline points={RSI} stroke="#1e90ff" strokeWidth="2" />
          <g stroke="#fff200">
            <path d="M314 532l-1 4 3 6 4 4 3-7 2-5 1-8" />
            <path d="M369 531h2l1 14 1 5 2 1 2-4 4-4 2-3v-9l3-3" />
            <path d="M517 531v4l3 3 4 6h2v-5l3-5 5-3 14-5 8-6" />
            <path d="M697 626l3-7 3-7h1v20M694 638l1-1h18" />
            <path d="M763 618l4-7h6l5 3 3 4v7l-3 4-11 3 1 3 4-5 9 1h8" />
          </g>
        </g>
      </svg>
    </section>
  )
}

function RsiAxis() {
  return (
    <div className="flex w-[42px] shrink-0 flex-col pt-[2px] pl-[3px] text-[9px] leading-[12px] text-white">
      <span>100</span>
      <span className="mt-[23px]">70</span>
      <span className="mt-4">50</span>
      <span className="mt-4">30</span>
      <span className="mt-6">0</span>
    </div>
  )
}

function TimeAxis() {
  const tag = 'absolute top-[3px] h-[12px] overflow-hidden bg-[#f00] pl-[4px] text-[9px] leading-[12px] whitespace-nowrap text-black'
  return (
    <div className="relative flex h-[18px] shrink-0 overflow-hidden text-[9px] text-white">
      {TIMES.map((t) => (
        <div key={t} className="w-16 shrink-0 whitespace-nowrap">
          <i className="ml-px block h-[3px] w-px bg-white" />
          <span className="block leading-[12px]">{t}</span>
        </div>
      ))}
      <span className={`${tag} left-[293px] w-[28px]`}>2013.</span>
      <span className={`${tag} left-[321px] w-[80px]`}>2013.03.04 10:02</span>
      <span className={`${tag} left-[465px] w-[80px]`}>2013.03.04 10:38</span>
      <span className={`${tag} left-[681px] w-[32px]`}>2013.0</span>
      <span className={`${tag} left-[713px] w-[80px]`}>2013.03.04 11:40</span>
    </div>
  )
}

function ChartWindow() {
  return (
    <main className="flex grow flex-col border-t border-r-2 border-b border-l-2 border-t-[#404040] border-r-[#e3e3e3] border-b-[#e3e3e3] border-l-[#808080] bg-black pt-[2px] pl-[2px]">
      <div className="flex min-h-[300px] shrink-0 grow basis-[430px]">
        <PricePanel />
        <PriceAxis />
      </div>
      <div className="mt-px flex h-[142px] shrink-0">
        <RsiPanel />
        <RsiAxis />
      </div>
      <TimeAxis />
    </main>
  )
}

function Tabs() {
  const tab = 'h-[14px] border-r border-[#808080] text-left leading-[13px] text-[#808080]'
  return (
    <div className="flex h-[21px] shrink-0 items-start border-t border-b border-t-black border-b-white bg-[#f0f0f0] text-[11px]">
      <div className="mt-[2px] flex pl-[2px]">
        <button className={`${tab} w-[83px] pl-[12px]`}>EURUSD,M1</button>
        <button className={`${tab} w-[80px] pl-[9px]`}>EURUSD,M5</button>
        <button className={`${tab} w-[88px] pl-[10px]`}>EURUSD,M15</button>
        <button className="h-[14px] w-[79px] pl-[9px] text-left leading-[13px] text-[#808080]">EURUSD,M1</button>
      </div>
      <button className="h-[18px] w-[120px] border-r-2 border-b border-l border-black bg-white pb-px leading-[16px] text-black">
        EURUSD,M1 (visual)
      </button>
      <div className="mt-[6px] mr-[7px] ml-auto flex gap-[14px]">
        <button aria-label="Scroll left">
          <svg width="4" height="7" viewBox="0 0 4 7"><path d="M4 0v7L0 3.500z" fill="#808080" /></svg>
        </button>
        <button aria-label="Scroll right">
          <svg width="4" height="7" viewBox="0 0 4 7"><path d="M0 0v7l4-3.500z" fill="#808080" /></svg>
        </button>
      </div>
    </div>
  )
}

function StatusBar() {
  const cell = 'h-4 shrink-0 border-l border-[#a0a0a0]'
  return (
    <footer className="flex h-[20px] shrink-0 items-center bg-[#f0f0f0] pt-px text-[11px] text-black">
      <span className="grow pl-[2px]">Для справки, нажмите F1</span>
      <span className={`${cell} w-[116px] pl-[5px] leading-4`}>Default</span>
      <span className={`${cell} w-[102px]`} />
      <span className={`${cell} w-[71px]`} />
      <span className={`${cell} w-[71px]`} />
      <span className={`${cell} w-[68px]`} />
      <span className={`${cell} w-[70px]`} />
      <span className={`${cell} w-[66px]`} />
      <span className={`${cell} flex w-[162px] items-center pl-[5px]`}>
        <svg width="24" height="12" viewBox="0 0 24 12" shapeRendering="crispEdges">
          {[9, 8, 7, 7, 6, 5, 4, 3].map((h, i) => (
            <g key={i}>
              <rect x={i * 3} y="0" width="2" height={h} fill="#6b7f0a" />
              <rect x={i * 3} y={h + 1} width="2" height={11 - h} fill="#10425c" />
            </g>
          ))}
        </svg>
        <span className="pl-[40px]">3407/5 kb</span>
      </span>
    </footer>
  )
}

export default function App() {
  return (
    <div className="flex min-h-screen flex-col overflow-hidden bg-[#f0f0f0] font-['Noto_Sans',sans-serif]">
      <TitleBar />
      <MenuBar />
      <Toolbar />
      <ChartWindow />
      <Tabs />
      <StatusBar />
    </div>
  )
}
